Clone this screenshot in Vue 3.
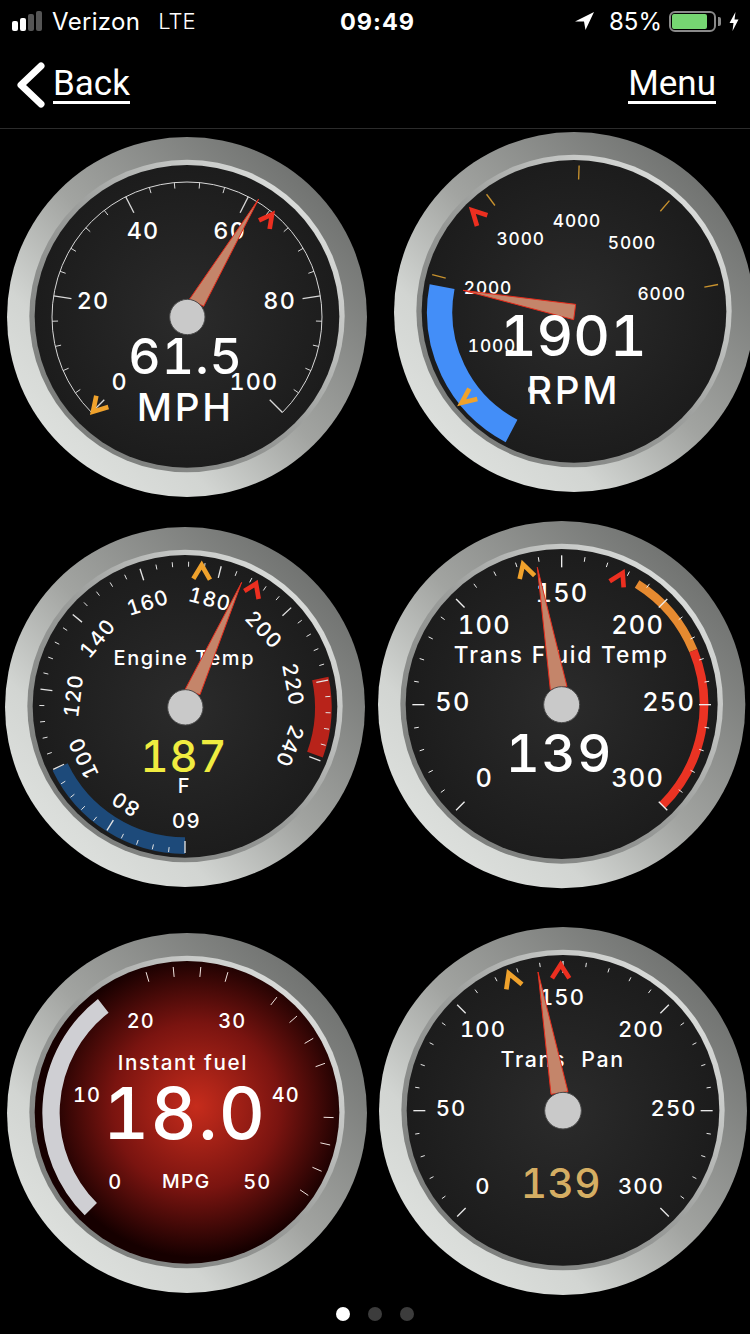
<template>
  <div class="page">
    <div class="status">
      <div class="status-left">
        <div class="signal">
          <i class="on b1"></i><i class="on b2"></i><i class="b3"></i><i class="b4"></i>
        </div>
        <span class="carrier">Verizon</span>
        <span class="net">LTE</span>
      </div>
      <span class="time">09:49</span>
      <div class="status-right">
        <svg class="arrow" width="19" height="18" viewBox="0 0 19 18"><path d="M19 0 L0 9.5 L9 9.5 L10.5 18 Z" fill="#fff" /></svg>
        <span class="pct">85%</span>
        <div class="battery"><div class="level"></div></div>
        <div class="nub"></div>
        <svg class="bolt" width="10" height="19" viewBox="0 0 10 19"><path d="M6.5 0 L0.5 11 L4.5 11 L3.5 19 L9.5 7.5 L5.5 7.5 Z" fill="#fff" /></svg>
      </div>
    </div>

    <div class="nav">
      <a class="nav-back">
        <svg width="30" height="46" viewBox="0 0 30 46"><path d="M25 4 L5 23 L25 42" fill="none" stroke="#fff" stroke-width="7" stroke-linecap="round" stroke-linejoin="round" /></svg>
        <span class="nav-link">Back</span>
      </a>
      <span class="nav-link">Menu</span>
    </div>

    <div class="dash">
      <svg
        v-for="g in gauges"
        :key="g.id"
        class="gauge"
        :width="(g.R * 2) / 3"
        :height="(g.R * 2) / 3"
        :viewBox="`${g.cx - g.R} ${g.cy - g.R} ${g.R * 2} ${g.R * 2}`"
        :style="{ marginLeft: g.ml + 'px', marginTop: g.mt + 'px' }"
      >
        <defs>
          <linearGradient :id="`bezel-${g.id}`" x1="0.15" y1="0.85" x2="0.85" y2="0.15">
            <stop offset="0" stop-color="#dcdfdc" />
            <stop offset="0.2" stop-color="#d2d5d2" />
            <stop offset="0.5" stop-color="#a2a4a1" />
            <stop offset="1" stop-color="#727472" />
          </linearGradient>
          <linearGradient :id="`ring-${g.id}`" x1="0.15" y1="0.85" x2="0.85" y2="0.15">
            <stop offset="0" stop-color="#7c7e7c" />
            <stop offset="0.5" stop-color="#9c9e9c" />
            <stop offset="1" stop-color="#d8dad8" />
          </linearGradient>
          <radialGradient :id="`face-${g.id}`" :cx="g.red ? 0.53 : 0.5" :cy="g.red ? 0.48 : 0.5" r="0.5">
            <stop v-if="g.red" offset="0" stop-color="#c62c1c" />
            <stop v-if="g.red" offset="0.55" stop-color="#7a1410" />
            <stop v-if="g.red" offset="1" stop-color="#160000" />
            <stop v-if="!g.red" offset="0" stop-color="#2b2b2b" />
            <stop v-if="!g.red" offset="1" stop-color="#1c1c1c" />
          </radialGradient>
        </defs>

        <circle :cx="g.cx" :cy="g.cy" :r="g.R" :fill="`url(#bezel-${g.id})`" />
        <ellipse :cx="g.cx" :cy="g.cy - 3" :rx="g.R - 67" :ry="g.R - 71" :fill="`url(#ring-${g.id})`" />
        <ellipse :cx="g.cx" :cy="g.cy - 2" :rx="g.R - 83" :ry="g.R - 86" :fill="`url(#face-${g.id})`" />

        <line
          v-for="(t, i) in g.under"
          :key="'u' + i"
          :x1="t.x1"
          :y1="t.y1"
          :x2="t.x2"
          :y2="t.y2"
          :stroke="g.tickColor"
          :stroke-width="t.w"
        />
        <path v-for="(b, i) in g.bands" :key="'b' + i" :d="b.d" fill="none" :stroke="b.color" :stroke-width="b.w" />
        <path v-if="g.dial" :d="g.dial" fill="none" stroke="#d8d8d8" stroke-width="3" />
        <line
          v-for="(t, i) in g.ticks"
          :key="'t' + i"
          :x1="t.x1"
          :y1="t.y1"
          :x2="t.x2"
          :y2="t.y2"
          :stroke="g.tickColor"
          :stroke-width="t.w"
        />

        <text
          v-for="l in g.labels"
          :key="l.t"
          class="txt"
          :x="l.x"
          :y="l.y"
          dy=".36em"
          :font-size="g.labelSize"
          :letter-spacing="g.labelSize * 0.05"
          :transform="l.r ? `rotate(${l.r} ${l.x} ${l.y})` : null"
        >{{ l.t }}</text>

        <text
          v-if="g.title"
          class="txt"
          :x="g.title.x"
          :y="g.title.y"
          dy=".36em"
          :font-size="g.title.size"
          :letter-spacing="g.title.size * 0.08"
        >{{ g.title.t }}</text>

        <polygon v-if="g.needle" :points="g.needle" fill="#c4856a" stroke="#e62c1c" stroke-width="3" stroke-linejoin="miter" />
        <circle v-if="g.hub" :cx="g.hub.x" :cy="g.hub.y" :r="g.hub.r" fill="#c9c9c9" stroke="#4c4c4c" stroke-width="3" />
        <circle v-if="g.speck" :cx="g.speck.x" :cy="g.speck.y" r="10" fill="#cfcfcf" />

        <polyline v-if="g.low" :points="g.low" fill="none" stroke="#f0a22c" stroke-width="14" stroke-linejoin="miter" stroke-miterlimit="8" />
        <polyline v-if="g.high" :points="g.high" fill="none" stroke="#ec2f20" stroke-width="14" stroke-linejoin="miter" stroke-miterlimit="8" />

        <text
          class="txt value"
          :class="g.value.tone"
          :x="g.value.x"
          :y="g.value.y"
          dy=".36em"
          :font-size="g.value.size"
          :letter-spacing="g.value.size * (g.value.ls ?? 0.03)"
        >{{ g.value.t }}</text>
        <text
          v-if="g.unit"
          class="txt"
          :x="g.unit.x"
          :y="g.unit.y"
          dy=".36em"
          :font-size="g.unit.size"
          :letter-spacing="g.unit.size * 0.07"
        >{{ g.unit.t }}</text>
      </svg>
    </div>

    <div class="dots">
      <span class="dot active"></span>
      <span class="dot"></span>
      <span class="dot"></span>
    </div>
  </div>
</template>

<script setup>
// angles are degrees clockwise from 12 o'clock, gauge coords are 3x screen px
function pt(cx, cy, deg, r) {
  const a = (deg * Math.PI) / 180
  return [cx + r * Math.sin(a), cy - r * Math.cos(a)]
}

function arc(cx, cy, r, from, to) {
  const [x1, y1] = pt(cx, cy, from, r)
  const [x2, y2] = pt(cx, cy, to, r)
  const large = to - from > 180 ? 1 : 0
  return `M${x1} ${y1} A${r} ${r} 0 ${large} 1 ${x2} ${y2}`
}

function tick(cx, cy, deg, outer, len, w) {
  const [x1, y1] = pt(cx, cy, deg, outer)
  const [x2, y2] = pt(cx, cy, deg, outer - len)
  return { x1, y1, x2, y2, w }
}

function scale(cx, cy, opts) {
  const out = []
  for (let i = 0; i <= opts.count; i++) {
    const major = i % opts.every === 0
    out.push(
      tick(cx, cy, opts.from + i * opts.step, opts.outer, major ? opts.majorLen : opts.minorLen, major ? 4 : 3)
    )
  }
  return out
}

function labels(list) {
  return list.map(([t, x, y, r]) => ({ t, x, y, r }))
}

const gauges = [
  {
    id: 'speed',
    cx: 562, cy: 562, R: 540, ml: 7.33, mt: 5.33,
    tickColor: '#d8d8d8',
    dial: arc(562, 562, 405, -135, 135),
    ticks: scale(562, 562, { from: -135, step: 10.8, count: 25, every: 5, outer: 405, majorLen: 54, minorLen: 18 }),
    labelSize: 70,
    labels: labels([['40', 430, 302], ['60', 690, 302], ['20', 280, 512], ['80', 840, 512], ['0', 360, 755], ['100', 763, 755]]),
    needle: '777,208 570,508 612,530',
    hub: { x: 563, y: 562, r: 53 },
    low: '290,798 280,846 326,832',
    high: '778,272 817,254 810,298',
    value: { t: '61.5', x: 558, y: 680, size: 150, ls: 0.02 },
    unit: { t: 'MPH', x: 557, y: 832, size: 116 }
  },
  {
    id: 'rpm',
    cx: 598, cy: 545, R: 540, ml: 19.33, mt: 0,
    tickColor: '#c8922e',
    under: [tick(598, 545, -151.6, 440, 42, 3)],
    bands: [{ d: arc(598, 545, 403, -152.3, -79.1), color: '#438ef8', w: 76 }],
    ticks: [2, 40.6, 79.2, -36.6, -75.2].map(a => tick(598, 545, a, 440, 42, 4)),
    labelSize: 52,
    labels: labels([['4000', 607, 270], ['3000', 438, 325], ['5000', 772, 337], ['6000', 861, 490], ['2000', 340, 472], ['1000', 352, 645]]),
    needle: '265,480 603,522 597,568',
    speck: { x: 470, y: 778 },
    low: '284,775 261,817 308,806',
    high: '338,255 293,240 307,287',
    value: { t: '1901', x: 596, y: 615, size: 170, ls: 0 },
    unit: { t: 'RPM', x: 597, y: 780, size: 116 }
  },
  {
    id: 'engine',
    cx: 555, cy: 562, R: 540, ml: 5, mt: 6.33,
    tickColor: '#e4e4e4',
    bands: [
      { d: arc(555, 563, 415, -180, -115.5), color: '#1d4a7a', w: 50 },
      { d: arc(555, 563, 415, 78, 110), color: '#b8231a', w: 50 }
    ],
    ticks: scale(555, 563, { from: -180, step: 6.48, count: 45, every: 5, outer: 437, majorLen: 36, minorLen: 15 }),
    labelSize: 62,
    labels: labels([
      ['60', 556, 903, 180], ['80', 376, 853, -147.6], ['100', 250, 715, -115.2], ['120', 220, 528, -82.8],
      ['140', 292, 355, -50.4], ['160', 443, 248, -18], ['180', 630, 238, 14.4], ['200', 792, 330, 46.8],
      ['220', 880, 495, 79.2], ['240', 870, 680, 111.6]
    ]),
    title: { t: 'Engine Temp', x: 553, y: 415, size: 60 },
    needle: '725,188 555,510 600,525',
    hub: { x: 556, y: 563, r: 53 },
    low: '580,177 605,136 630,180',
    high: '733,214 768,192 776,238',
    value: { t: '187', x: 552, y: 710, size: 130, ls: 0.02, tone: 'yellow' },
    unit: { t: 'F', x: 553, y: 797, size: 60 }
  },
  {
    id: 'trans',
    cx: 559, cy: 567, R: 551, ml: 2.67, mt: 0,
    tickColor: '#efefef',
    bands: [
      { d: arc(559, 567, 427, 32, 67.7), color: '#e68a30', w: 26 },
      { d: arc(559, 567, 427, 67.7, 135), color: '#ea3323', w: 26 }
    ],
    ticks: scale(559, 567, { from: -135, step: 9, count: 30, every: 5, outer: 448, majorLen: 36, minorLen: 14 }),
    labelSize: 76,
    labels: labels([['150', 560, 232], ['100', 327, 327], ['200', 787, 327], ['50', 233, 558], ['250', 880, 558], ['0', 327, 787], ['300', 787, 787]]),
    title: { t: 'Trans Fluid Temp', x: 558, y: 418, size: 68 },
    needle: '486,155 525,522 575,512',
    hub: { x: 559, y: 567, r: 54 },
    low: '433,190 443,146 478,180',
    high: '703,197 742,172 745,215',
    value: { t: '139', x: 552, y: 713, size: 158 }
  },
  {
    id: 'fuel',
    cx: 562, cy: 565, R: 540, ml: 7.33, mt: 6.33,
    red: true,
    tickColor: '#f0e4e0',
    bands: [{ d: arc(562, 565, 408, -135, -38), color: '#cfcfd3', w: 52 }],
    ticks: [-16.2, -5.4, 5.4, 16.2, 37.8, 48.6, 59.4, 70.2, 91.8, 102.6, 113.4, 124.2].map(a => tick(562, 565, a, 440, 30, 3)),
    labelSize: 60,
    labels: labels([['20', 423, 287], ['30', 698, 287], ['10', 262, 510], ['40', 858, 510], ['0', 347, 770], ['50', 773, 770]]),
    title: { t: 'Instant fuel', x: 550, y: 415, size: 62 },
    value: { t: '18.0', x: 555, y: 565, size: 214, ls: 0.02 },
    unit: { t: 'MPG', x: 560, y: 768, size: 58 }
  },
  {
    id: 'pan',
    cx: 563, cy: 575, R: 552, ml: 4, mt: 0,
    tickColor: '#e8e8e8',
    ticks: scale(563, 574, { from: -135, step: 9, count: 30, every: 5, outer: 449, majorLen: 36, minorLen: 13 }),
    labelSize: 66,
    labels: labels([['150', 560, 232], ['100', 323, 330], ['200', 797, 330], ['50', 227, 565], ['250', 895, 565], ['0', 323, 800], ['300', 797, 800]]),
    title: { t: 'Trans  Pan', x: 562, y: 420, size: 64 },
    needle: '488,158 527,525 578,517',
    hub: { x: 563, y: 574, r: 55 },
    low: '393,210 400,162 440,195',
    high: '530,177 556,136 582,177',
    value: { t: '139', x: 557, y: 793, size: 122, ls: 0.01, tone: 'gold' }
  }
]
</script>

<style>
html,
body {
  background: #000;
}
</style>

<style scoped>
.page {
  width: 750px;
  height: 1334px;
  overflow: hidden;
  background: #000;
  color: #fff;
  font-family: Inter, "Liberation Sans", sans-serif;
}

.status {
  height: 42px;
  display: flex;
  align-items: center;
  justify-content: space-between;
  padding: 0 11px 0 12px;
  box-sizing: border-box;
  position: relative;
}

.status-left,
.status-right {
  display: flex;
  align-items: center;
}

.signal {
  display: flex;
  align-items: flex-end;
  gap: 2px;
  height: 20px;
  margin-right: 10px;
}

.signal i {
  width: 6px;
  background: #555;
  border-radius: 2px;
}

.signal i.on {
  background: #fff;
}

.b1 { height: 10px; }
.b2 { height: 13px; }
.b3 { height: 17px; }
.b4 { height: 20px; }

.carrier {
  font-size: 24px;
  letter-spacing: 0.3px;
}

.net {
  font-size: 22px;
  font-weight: 300;
  margin-left: 18px;
}

.time {
  position: absolute;
  left: 340px;
  font-size: 23.5px;
  font-weight: 700;
  letter-spacing: 1px;
}

.arrow {
  margin-right: 15px;
}

.pct {
  font-size: 24px;
  margin-right: 7px;
}

.battery {
  width: 47px;
  height: 21px;
  border: 2px solid #8a8a8a;
  border-radius: 6px;
  padding: 1px;
  box-sizing: border-box;
}

.level {
  width: 35px;
  height: 15px;
  background: #76d672;
  border-radius: 2px;
}

.nub {
  width: 3px;
  height: 9px;
  background: #8a8a8a;
  border-radius: 0 2px 2px 0;
  margin: 0 8px 0 2px;
}

.nav {
  height: 86px;
  padding: 0 34px 0 16px;
  display: flex;
  align-items: center;
  justify-content: space-between;
  border-bottom: 1px solid #2c2c2c;
}

.nav-back {
  display: flex;
  align-items: center;
  gap: 7px;
}

.nav-link {
  font-family: Roboto, Inter, sans-serif;
  font-size: 35px;
  line-height: 35px;
  border-bottom: 3px solid #fff;
}

.dash {
  padding-top: 3px;
  display: grid;
  grid-template-columns: 375px 375px;
  grid-template-rows: 389px 406px 380px;
}

.gauge {
  display: block;
  overflow: visible;
}

.txt {
  font-family: Inter, "Liberation Sans", sans-serif;
  font-weight: 500;
  font-variant-numeric: tabular-nums;
  fill: #fff;
  text-anchor: middle;
  white-space: pre;
}

.value.yellow {
  fill: #f0ec40;
}

.value.gold {
  fill: #d5ae63;
}

.dots {
  display: flex;
  justify-content: center;
  gap: 18px;
}

.dot {
  width: 14px;
  height: 14px;
  border-radius: 50%;
  background: #3c3c3c;
}

.dot.active {
  background: #fff;
}
</style>
